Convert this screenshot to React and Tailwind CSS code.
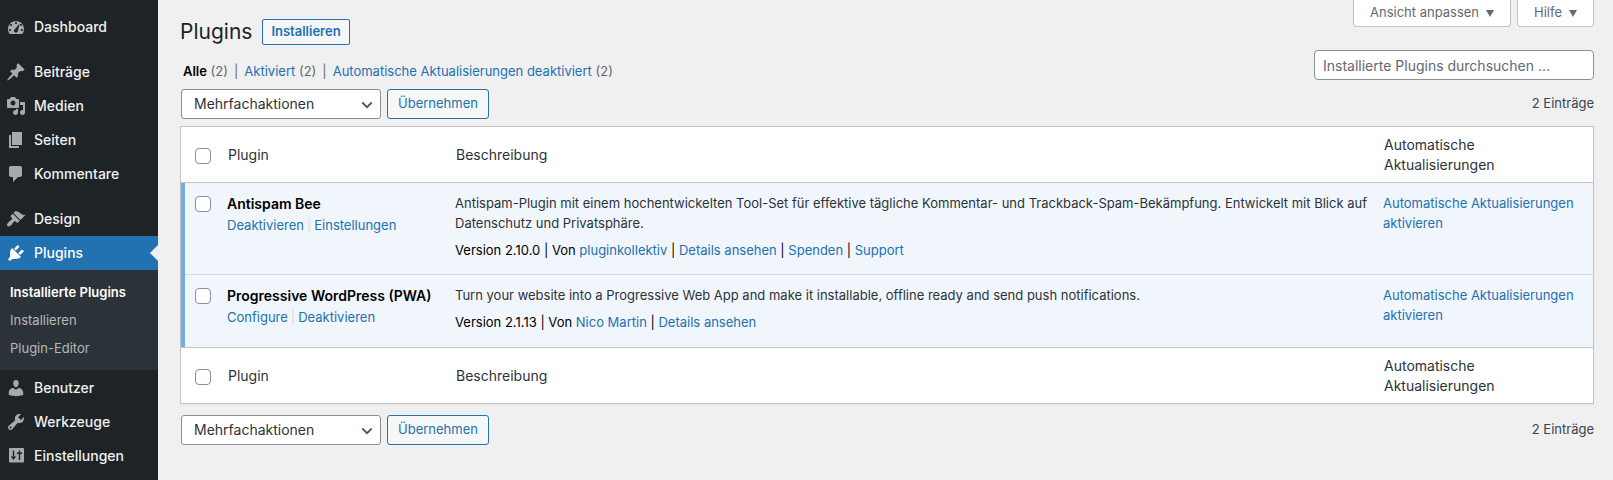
import React from "react";

const ICONS = {
  dashboard:
    "M3.76 17.01h12.48C17.34 15.63 18 13.9 18 12c0-4.41-3.58-8-8-8s-8 3.59-8 8c0 1.9.66 3.63 1.76 5.01zM9 6c0-.55.45-1 1-1s1 .45 1 1c0 .56-.45 1-1 1s-1-.44-1-1zM4 8c0-.55.45-1 1-1s1 .45 1 1c0 .56-.45 1-1 1s-1-.44-1-1zM8.7 12.6L13.6 6.6 11.9 14c-.3 1-1.1 1.6-2 1.6-1.100 0-2-.9-2-1.900 0-.4.300-.8.800-1.100zM14 8c0-.55.45-1 1-1s1 .45 1 1c0 .56-.45 1-1 1s-1-.44-1-1zM3 13c0-.55.45-1 1-1s1 .45 1 1c0 .56-.45 1-1 1s-1-.44-1-1zm12 0c0-.55.45-1 1-1s1 .45 1 1c0 .56-.45 1-1 1s-1-.44-1-1z",
  pin: "M10.44 3.02l1.82-1.82 6.36 6.35-1.83 1.82c-1.05-.68-2.48-.57-3.41.36l-.75.75c-.92.93-1.04 2.35-.35 3.41l-1.83 1.82-2.41-2.41-2.8 2.79c-.42.42-3.38 2.71-3.8 2.29s1.86-3.39 2.28-3.81l2.79-2.79L4.1 9.36l1.83-1.82c1.05.69 2.48.57 3.4-.36l.75-.75c.93-.92 1.05-2.35.36-3.41z",
  media:
    "M13 11V4c0-.55-.45-1-1-1h-1.67L9 1H5L3.67 3H2c-.55 0-1 .45-1 1v7c0 .55.45 1 1 1h10c.55 0 1-.45 1-1zM7 4.5c1.38 0 2.5 1.12 2.5 2.5S8.38 9.5 7 9.5 4.5 8.38 4.5 7 5.62 4.5 7 4.5zM14 6h5v10.5c0 1.38-1.12 2.5-2.5 2.5S14 17.88 14 16.5s1.12-2.5 2.5-2.5c.17 0 .34.02.5.05V9h-3V6zm-4 8.05V13h2v3.5c0 1.38-1.12 2.5-2.5 2.5S7 17.88 7 16.5 8.12 14 9.5 14c.17 0 .34.02.5.05z",
  page: "M6 15V2h10v13H6zm-1 1h8v2H3V5h2v11z",
  comment:
    "M5 2h9c1.1 0 2 .9 2 2v7c0 1.1-.9 2-2 2h-2l-5 5v-5H5c-1.1 0-2-.9-2-2V4c0-1.1.9-2 2-2z",
  brush:
    "M14.48 11.06L7.41 3.99l1.5-1.5c.5-.56 2.3-.47 3.51.32 1.21.8 1.43 1.28 2.91 2.1 1.18.64 2.45 1.26 4.45.85zm-.71.71L6.7 4.7 4.93 6.47c-.39.39-.39 1.02 0 1.41l1.06 1.06c.39.39.39 1.03 0 1.42-.6.6-1.43 1.11-2.21 1.69-.35.26-.7.53-1.01.84C1.43 14.23.4 16.08 1.4 17.07c.99 1 2.84-.03 4.18-1.36.31-.31.58-.66.85-1.02.57-.78 1.08-1.61 1.69-2.21.39-.39 1.02-.39 1.41 0l1.06 1.06c.39.39 1.02.39 1.41 0z",
  plug: "M13.11 4.36L9.87 7.6 8 5.73l3.24-3.24c.35-.34 1.05-.2 1.56.32.52.51.66 1.21.31 1.55zm-8 1.77l.91-1.12 9.01 9.01-1.19.84c-.71.71-2.63 1.16-3.82 1.16H6.14L4.9 17.26c-.59.59-1.54.59-2.12 0-.59-.58-.59-1.53 0-2.12l1.24-1.24v-3.88c0-1.13.4-3.19 1.09-3.89zm7.26 3.97l3.24-3.24c.34-.35 1.04-.21 1.55.31.52.51.66 1.21.31 1.55l-3.24 3.25z",
  user: "M10 9.25c-2.27 0-2.73-3.44-2.73-3.44C7 4.02 7.82 2 9.97 2c2.16 0 2.98 2.02 2.71 3.81 0 0-.41 3.44-2.68 3.44zm0 2.57L12.72 10c2.39 0 4.52 2.33 4.52 4.53v2.49s-3.65 1.13-7.24 1.13c-3.65 0-7.24-1.13-7.24-1.13v-2.49c0-2.25 1.94-4.48 4.47-4.48z",
  wrench:
    "M16.68 9.77c-1.34 1.34-3.3 1.67-4.95.99l-5.41 6.52c-.99.99-2.59.99-3.58 0s-.99-2.59 0-3.57l6.52-5.42c-.68-1.65-.35-3.61.99-4.95 1.28-1.28 3.12-1.62 4.72-1.06l-2.89 2.89 2.82 2.82 2.86-2.87c.53 1.58.18 3.39-1.08 4.65zM3.81 16.21c.4.39 1.04.39 1.43 0 .4-.4.4-1.04 0-1.43-.39-.4-1.03-.4-1.43 0-.39.39-.39 1.03 0 1.43z",
  sliders:
    "M18 15.5V3c0-.55-.45-1-1-1H4c-.55 0-1 .45-1 1v12.5c0 .55.45 1 1 1h13c.55 0 1-.45 1-1zM8.2 10.6H10.2L7.5 14 4.8 10.6H6.8V4.5h1.4zM14.2 8V14h-1.4V8H11V6.6h1.8V4.5h1.4v2.1h2V8z",
};

function Icon({ name }) {
  return (
    <svg viewBox="0 0 20 20" className="size-5 shrink-0" fill="currentColor" fillRule="evenodd" aria-hidden="true">
      <path d={ICONS[name]} />
    </svg>
  );
}

function MenuItem({ icon, label, active }) {
  return (
    <li>
      <a
        href="#"
        className={
          active
            ? "relative flex h-[34px] items-center gap-2 bg-[#2271b1] pl-1.5 text-sm font-medium text-white"
            : "flex h-[34px] items-center gap-2 pl-1.5 text-sm font-medium text-[#f0f0f1]"
        }
      >
        <span className={active ? "text-white" : "text-[#a7aaad]"}>
          <Icon name={icon} />
        </span>
        {label}
        {active && (
          <span className="absolute top-1/2 right-0 -translate-y-1/2 border-y-8 border-r-8 border-y-transparent border-r-[#f0f0f1]" />
        )}
      </a>
    </li>
  );
}

function Sidebar() {
  return (
    <nav aria-label="Hauptmenü" className="w-[158px] shrink-0 bg-[#1d2327] pt-2.5">
      <ul>
        <MenuItem icon="dashboard" label="Dashboard" />
      </ul>
      <ul className="mt-[11px]">
        <MenuItem icon="pin" label="Beiträge" />
        <MenuItem icon="media" label="Medien" />
        <MenuItem icon="page" label="Seiten" />
        <MenuItem icon="comment" label="Kommentare" />
      </ul>
      <ul className="mt-[11px]">
        <MenuItem icon="brush" label="Design" />
        <MenuItem icon="plug" label="Plugins" active />
      </ul>
      <ul className="mb-px bg-[#2c3338] py-2 text-[13px] leading-7">
        <li>
          <a href="#" className="block pl-2.5 font-semibold text-white">Installierte Plugins</a>
        </li>
        <li>
          <a href="#" className="block pl-2.5 text-[#b4b9be]">Installieren</a>
        </li>
        <li>
          <a href="#" className="block pl-2.5 text-[#b4b9be]">Plugin-Editor</a>
        </li>
      </ul>
      <ul>
        <MenuItem icon="user" label="Benutzer" />
        <MenuItem icon="wrench" label="Werkzeuge" />
        <MenuItem icon="sliders" label="Einstellungen" />
      </ul>
    </nav>
  );
}

function Link({ children }) {
  return <a href="#" className="text-[#2271b1]">{children}</a>;
}

function Check({ label }) {
  return (
    <input
      type="checkbox"
      aria-label={label}
      className="block size-4 appearance-none rounded-sm border border-[#8c8f94] bg-white checked:bg-[#2271b1]"
    />
  );
}

function BulkBar() {
  return (
    <div className="flex items-center pl-px">
      <div className="relative">
        <select
          aria-label="Mehrfachaktion wählen"
          className="block h-[30px] w-[200px] appearance-none rounded-[3px] border border-[#8c8f94] bg-white pr-6 pl-3 text-sm leading-7 text-[#2c3338]"
        >
          <option>Mehrfachaktionen</option>
        </select>
        <svg viewBox="0 0 12 8" className="pointer-events-none absolute top-3 right-2 h-2 w-3" fill="none" stroke="#50575e" strokeWidth="1.8" aria-hidden="true">
          <path d="M1.300 1.500l4.700 4.700 4.700-4.700" />
        </svg>
      </div>
      <button type="button" className="ml-1.5 h-[30px] rounded-[3px] border border-[#2271b1] bg-[#f6f7f7] px-2.5 text-[13px] text-[#2271b1]">
        Übernehmen
      </button>
      <span className="ml-auto text-[13px] text-[#3c434a]">2 Einträge</span>
    </div>
  );
}

function ScreenTab({ children }) {
  return (
    <button type="button" className="flex h-[27px] items-center gap-[7px] rounded-b border border-t-0 border-[#c3c4c7] bg-white px-4 text-[13px] text-[#646970]">
      {children}
      <svg viewBox="0 0 8 7" className="h-[7px] w-2" fill="currentColor" aria-hidden="true">
        <path d="M0 0h8L4 7z" />
      </svg>
    </button>
  );
}

function HeadRow({ label, foot }) {
  const line = foot ? "border-t border-[#c3c4c7]" : "border-b border-[#c3c4c7]";
  return (
    <tr className="h-14">
      <td className={`pt-0.5 pl-[14px] align-middle ${line}`}><Check label={label} /></td>
      <th scope="col" className={`pt-px pl-3 font-normal ${line}`}>Plugin</th>
      <th scope="col" className={`pt-px pl-3 font-normal ${line}`}>Beschreibung</th>
      <th scope="col" className={`pt-2 pr-5 pb-[7px] pl-3 font-normal ${line}`}>
        Automatische<br />Aktualisierungen
      </th>
    </tr>
  );
}

function PluginRow({ name, actions, description, version, links, first }) {
  const border = first ? "" : "border-t border-[#d5dbe3]";
  return (
    <tr className="bg-[#f0f6fc] text-left align-top text-[13px] leading-5 text-[#2c3338]">
      <td className="border-l-4 border-[#72aee6] p-0">
        <div className={`pt-[13px] pl-2.5 ${border}`}>
          <Check label={`${name} auswählen`} />
        </div>
      </td>
      <td className={`pt-2.5 pl-[11px] ${border}`}>
        <strong className="block text-sm leading-[22px] font-semibold text-black">{name}</strong>
        <span className="flex">
          <Link>{actions[0]}</Link>
          <span className="mx-[3px] text-[#dcdcde]">|</span>
          <Link>{actions[1]}</Link>
        </span>
      </td>
      <td className={`pt-2.5 pl-[11px] ${first ? "pb-3.5" : "pb-[15px]"} ${border}`}>
        <p>{description}</p>
        <p className="mt-[7px] text-black">
          Version {version} | Von{" "}
          {links.map((l, i) => (
            <React.Fragment key={l}>
              {i > 0 && " | "}
              <Link>{l}</Link>
            </React.Fragment>
          ))}
        </p>
      </td>
      <td className={`pt-2.5 pr-4 pl-[11px] ${border}`}>
        <Link>Automatische Aktualisierungen aktivieren</Link>
      </td>
    </tr>
  );
}

export default function App() {
  return (
    <div className="flex min-h-screen bg-[#f0f0f1] font-['Inter','Liberation_Sans',sans-serif] text-[13px] text-[#3c434a]">
      <Sidebar />
      <main className="min-w-0 flex-1 pr-[19px] pl-[22px]">
        <div className="flex justify-between">
          <div>
            <div className="flex items-center gap-2.5 pt-[19px]">
              <h1 className="text-[21px] leading-[26px] text-[#1d2327]">Plugins</h1>
              <a href="#" className="flex h-[26px] items-center rounded-[2px] border border-[#2271b1] bg-[#f6f7f7] px-2 text-[13px] font-semibold text-[#2271b1]">
                Installieren
              </a>
            </div>
            <ul className="mt-4 flex gap-1.5 pl-[3px] leading-5 text-[#646970]">
              <li><a href="#" className="font-semibold text-black">Alle</a> (2)</li>
              <li>|</li>
              <li><Link>Aktiviert</Link> (2)</li>
              <li>|</li>
              <li><Link>Automatische Aktualisierungen deaktiviert</Link> (2)</li>
            </ul>
          </div>
          <div className="flex flex-col items-end">
            <div className="flex gap-1.5">
              <ScreenTab>Ansicht anpassen</ScreenTab>
              <ScreenTab>Hilfe</ScreenTab>
            </div>
            <input
              type="search"
              aria-label="Installierte Plugins durchsuchen"
              placeholder="Installierte Plugins durchsuchen ..."
              className="mt-[23px] h-[30px] w-[280px] rounded border border-[#8c8f94] bg-white px-2 text-sm placeholder:text-[#646970]"
            />
          </div>
        </div>
        <div className="mt-2">
          <BulkBar />
        </div>
        <table className="mt-[7px] w-full table-fixed border-separate border-spacing-0 border border-[#c3c4c7] bg-white text-left text-sm leading-5 text-[#2c3338] shadow-xs">
          <colgroup>
            <col className="w-[35px]" />
            <col className="w-[228px]" />
            <col />
            <col className="w-[221px]" />
          </colgroup>
          <thead>
            <HeadRow label="Alle auswählen" />
          </thead>
          <tbody>
            <PluginRow
              first
              name="Antispam Bee"
              actions={["Deaktivieren", "Einstellungen"]}
              description="Antispam-Plugin mit einem hochentwickelten Tool-Set für effektive tägliche Kommentar- und Trackback-Spam-Bekämpfung. Entwickelt mit Blick auf Datenschutz und Privatsphäre."
              version="2.10.0"
              links={["pluginkollektiv", "Details ansehen", "Spenden", "Support"]}
            />
            <PluginRow
              name="Progressive WordPress (PWA)"
              actions={["Configure", "Deaktivieren"]}
              description="Turn your website into a Progressive Web App and make it installable, offline ready and send push notifications."
              version="2.1.13"
              links={["Nico Martin", "Details ansehen"]}
            />
          </tbody>
          <tfoot>
            <HeadRow label="Alle auswählen (unten)" foot />
          </tfoot>
        </table>
        <div className="mt-[11px]">
          <BulkBar />
        </div>
      </main>
    </div>
  );
}
